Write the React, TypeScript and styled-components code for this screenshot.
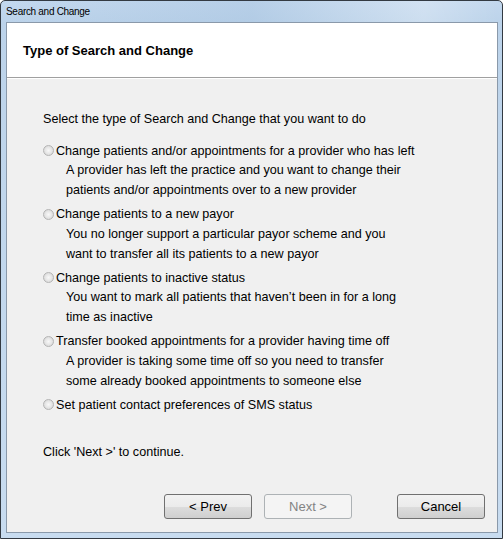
import React from 'react'
import styled, { createGlobalStyle } from 'styled-components'

const options = [
  {
    label: 'Change patients and/or appointments for a provider who has left',
    lines: [
      'A provider has left the practice and you want to change their',
      'patients and/or appointments over to a new provider',
    ],
  },
  {
    label: 'Change patients to a new payor',
    lines: [
      'You no longer support a particular payor scheme and you',
      'want to transfer all its patients to a new payor',
    ],
  },
  {
    label: 'Change patients to inactive status',
    lines: ['You want to mark all patients that haven\u2019t been in for a long', 'time as inactive'],
  },
  {
    label: 'Transfer booked appointments for a provider having time off',
    lines: [
      'A provider is taking some time off so you need to transfer',
      'some already booked appointments to someone else',
    ],
  },
  {
    label: 'Set patient contact preferences of SMS status',
    lines: [],
  },
]

const App: React.FC = () => {
  return (
    <>
      <GlobalStyle />
      <Window>
        <TitleBar>Search and Change</TitleBar>
        <Client>
          <Header>
            <HeaderTitle>Type of Search and Change</HeaderTitle>
          </Header>
          <Body>
            <Intro>Select the type of Search and Change that you want to do</Intro>
            <OptionList>
              {options.map((opt) => (
                <OptionGroup key={opt.label}>
                  <RadioRow>
                    <Radio />
                    <span>{opt.label}</span>
                  </RadioRow>
                  {opt.lines.map((line) => (
                    <SubLine key={line}>{line}</SubLine>
                  ))}
                </OptionGroup>
              ))}
            </OptionList>
            <Hint>Click 'Next &gt;' to continue.</Hint>
            <Footer>
              <Button>&lt; Prev</Button>
              <Button disabled>Next &gt;</Button>
              <CancelButton>Cancel</CancelButton>
            </Footer>
          </Body>
        </Client>
      </Window>
    </>
  )
}

const GlobalStyle = createGlobalStyle`
  html, body {
    margin: 0;
    padding: 0;
    background: #ffffff;
  }
  * {
    box-sizing: border-box;
  }
`

const Window = styled.div`
  width: 503px;
  height: 539px;
  border: 1px solid #333a42;
  border-radius: 5px 5px 0 0;
  background: linear-gradient(180deg, #c3d8ee 0px, #bcd3ea 22px, #c8dcf0 100%);
  padding: 0 4px 5px 5px;
  display: flex;
  flex-direction: column;
  font-family: 'Liberation Sans', Arial, sans-serif;
  color: #000;
`

const TitleBar = styled.div`
  height: 21px;
  display: flex;
  align-items: center;
  font-size: 10px;
  letter-spacing: -0.3px;
  color: #000;
  background: linear-gradient(90deg, rgba(255, 255, 255, 0) 0%, rgba(160, 190, 220, 0.35) 50%, rgba(255, 255, 255, 0.25) 85%, rgba(255, 255, 255, 0) 100%);
`

const Client = styled.div`
  flex: 1;
  display: flex;
  flex-direction: column;
  border: 1px solid #8a99aa;
  background: #f0f0f0;
`

const Header = styled.div`
  height: 55px;
  background: #ffffff;
  border-bottom: 1px solid #a0a0a0;
  box-shadow: 0 1px 0 #ffffff;
  display: flex;
  align-items: center;
  padding-left: 16px;
`

const HeaderTitle = styled.div`
  font-size: 13px;
  font-weight: bold;
`

const Body = styled.div`
  flex: 1;
  display: flex;
  flex-direction: column;
  padding: 31px 12px 13px 36px;
  font-size: 12.6px;
`

const Intro = styled.div`
  line-height: 20px;
`

const OptionList = styled.div`
  display: flex;
  flex-direction: column;
  gap: 4.6px;
  margin-top: 12px;
`

const OptionGroup = styled.div`
  display: flex;
  flex-direction: column;
`

const RadioRow = styled.div`
  display: flex;
  align-items: center;
  height: 19px;
`

const Radio = styled.span`
  width: 11px;
  height: 11px;
  border-radius: 50%;
  border: 1px solid #b4b4b4;
  background: radial-gradient(circle at 50% 50%, #f8f8f8 0%, #e8e8e8 45%, #cfcfcf 100%);
  margin-right: 2px;
  flex-shrink: 0;
`

const SubLine = styled.div`
  line-height: 20px;
  padding-left: 23px;
`

const Hint = styled.div`
  line-height: 20px;
  margin-top: 28px;
`

const Footer = styled.div`
  margin-top: auto;
  display: flex;
  justify-content: flex-end;
  gap: 12px;
`

const Button = styled.button`
  width: 88px;
  height: 25px;
  border: 1px solid #707070;
  border-radius: 3px;
  background: linear-gradient(180deg, #f2f2f2 0%, #ebebeb 50%, #dddddd 51%, #cfcfcf 100%);
  font-family: 'Liberation Sans', Arial, sans-serif;
  font-size: 13px;
  color: #000;
  padding: 0;

  &:disabled {
    border-color: #adb2b5;
    background: #f4f4f4;
    color: #838383;
  }
`

const CancelButton = styled(Button)`
  margin-left: 33px;
`

export default App
